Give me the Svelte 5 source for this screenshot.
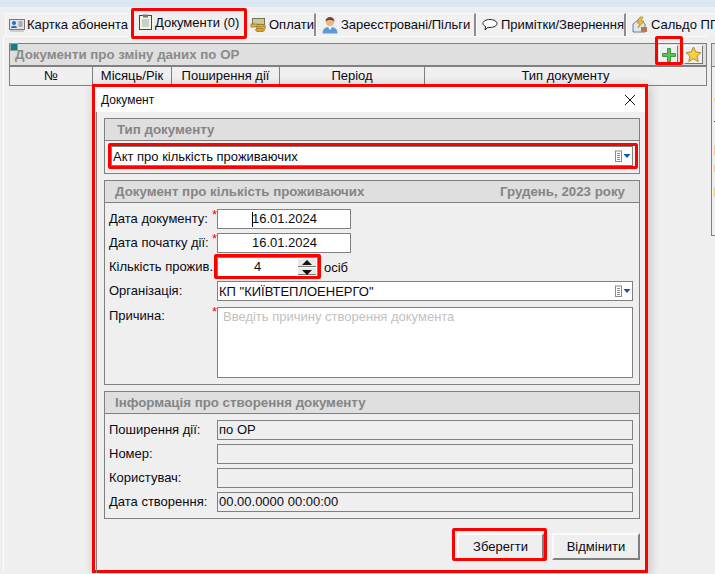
<script>
  const columns = ['№', 'Місяць/Рік', 'Поширення дії', 'Період', 'Тип документу'];
  const infoRows = [
    ['Поширення дії:', 'по ОР'],
    ['Номер:', ''],
    ['Користувач:', ''],
    ['Дата створення:', '00.00.0000 00:00:00']
  ];
</script>

{#snippet listIcon()}
  <svg class="listicon" width="17" height="12" viewBox="0 0 17 12" aria-hidden="true">
    <rect x="0.500" y="1" width="6" height="10.500" fill="#fff" stroke="#8a8a8a" />
    <path d="M2 3.500h3M2 5.500h3M2 7.500h3M2 9.500h3" stroke="#8a8a8a" fill="none" />
    <path d="M8.500 4h7l-3.500 4z" fill="#0f55b5" />
  </svg>
{/snippet}

<div class="page">
  <div class="band"></div>

  <nav class="tabs">
    <div class="tab">
      <svg width="16" height="14" viewBox="0 0 16 14" aria-hidden="true">
        <rect x="0.500" y="1.500" width="15" height="10" fill="#dfe3ea" stroke="#777" />
        <circle cx="5" cy="5" r="2" fill="#2f68b5" />
        <path d="M2 10c0-3 6-3 6 0z" fill="#2f68b5" />
        <path d="M9.500 4h4M9.500 6h4M9.500 8h4" stroke="#777" />
        <path d="M1 13h14" stroke="#aaa" />
      </svg>
      Картка абонента
    </div>
    <div class="tab active">
      <svg width="13" height="16" viewBox="0 0 13 16" aria-hidden="true">
        <rect x="0.500" y="1.500" width="12" height="14" fill="#f6f2e4" stroke="#6b3a20" />
        <rect x="4" y="0.500" width="5" height="3" fill="#777" />
        <path d="M3 6h7M3 8h7M3 10h7M3 12h7" stroke="#8fb7a8" />
      </svg>
      Документи (0)
    </div>
    <div class="tab">
      <svg width="17" height="15" viewBox="0 0 17 15" aria-hidden="true">
        <rect x="2.500" y="1.500" width="12" height="6" fill="#c9c9a6" stroke="#77754f" />
        <rect x="1" y="7" width="7" height="3" fill="#e0b040" stroke="#8f6a1a" stroke-width="0.700" />
        <ellipse cx="11" cy="9" rx="4.500" ry="1.800" fill="#e9b93f" stroke="#8f6a1a" stroke-width="0.700" />
        <ellipse cx="11" cy="11" rx="4.500" ry="1.800" fill="#e9b93f" stroke="#8f6a1a" stroke-width="0.700" />
        <ellipse cx="10" cy="13" rx="4.500" ry="1.800" fill="#d9a52f" stroke="#8f6a1a" stroke-width="0.700" />
      </svg>
      Оплати
    </div>
    <div class="tab">
      <svg width="16" height="18" viewBox="0 0 16 18" aria-hidden="true">
        <path d="M0.500 17.500c0-5 3-6.500 7.500-6.500s7.500 1.500 7.500 6.500z" fill="#5c9bd5" />
        <path d="M6 11l2 3 2-3z" fill="#fff" />
        <circle cx="8" cy="6" r="4.200" fill="#e8b58c" />
        <path d="M3.500 5.500c0-6 9-6 9 0-2.500-2-6.500-2-9 0z" fill="#6b4a2f" />
      </svg>
      Зареєстровані/Пільги
    </div>
    <div class="tab">
      <svg width="16" height="14" viewBox="0 0 16 14" aria-hidden="true">
        <path d="M8 1.500c4 0 7 1.700 7 4s-3 4-7 4c-.7 0-1.300 0-2-.2L3 12l.7-3.500C2 7.800 1 6.700 1 5.500c0-2.300 3-4 7-4z" fill="#fff" stroke="#222" />
      </svg>
      Примітки/Звернення
    </div>
    <div class="tab">
      <svg width="16" height="17" viewBox="0 0 16 17" aria-hidden="true">
        <path d="M1 16V8l6-5 6 5v8z" fill="#dfe6ef" stroke="#6f7d90" />
        <path d="M8 1l-3 6h3l-2 5 6-7H9l2-4z" fill="#f2c230" stroke="#a87a10" stroke-width="0.600" />
        <rect x="9" y="11" width="6" height="5" fill="#b9793f" />
      </svg>
      Сальдо ПП
    </div>
  </nav>

  <main class="content">
    <div class="marker"></div>
    <header class="panelhead">
      <span>Документи про зміну даних по ОР</span>
      <div class="tools">
        <button class="tool" aria-label="Додати">
          <svg width="14" height="14" viewBox="0 0 14 14" aria-hidden="true">
            <path d="M5.500 0.500h3v5h5v3h-5v5h-3v-5h-5v-3h5z" fill="#5cbf58" stroke="#3c9a42" />
          </svg>
        </button>
        <button class="tool" aria-label="Обране">
          <svg width="17" height="17" viewBox="0 0 17 17" aria-hidden="true">
            <path d="M8.500 1l2.300 5 5.200.6-3.900 3.500 1.100 5.400-4.700-2.700-4.700 2.700 1.100-5.400L1 6.600 6.200 6z" fill="#f7cf45" stroke="#b08a2a" />
          </svg>
        </button>
      </div>
    </header>
    <div class="thead">
      {#each columns as c}
        <div class="th">{c}</div>
      {/each}
    </div>
  </main>

  <aside class="sidepanel">
    <div class="sidehead"></div>
    <i class="dot d1"></i><i class="dot d2"></i><i class="dot d3"></i><i class="dot d4"></i><i class="dot d5"></i>
  </aside>

  <section class="modal">
    <div class="titlebar">
      <span>Документ</span>
      <svg width="12" height="12" viewBox="0 0 12 12" aria-hidden="true">
        <path d="M1 1l10 10M11 1L1 11" stroke="#111" stroke-width="1" fill="none" />
      </svg>
    </div>
    <div class="mbody">
      <fieldset class="group first">
        <div class="ghead"><span class="gtitle indent">Тип документу</span></div>
        <div class="selectwrap">
          <div class="box select">
            <span>Акт про кількість проживаючих</span>
            {@render listIcon()}
          </div>
        </div>
      </fieldset>

      <fieldset class="group second">
        <div class="ghead">
          <span class="gtitle">Документ про кількість проживаючих</span>
          <span class="gtitle">Грудень, 2023 року</span>
        </div>
        <div class="rows">
          <div class="row">
            <label>Дата документу:<b>*</b></label>
            <div class="box date first-date"><span class="caret"></span>16.01.2024</div>
          </div>
          <div class="row">
            <label>Дата початку дії:<b>*</b></label>
            <div class="box date">16.01.2024</div>
          </div>
          <div class="row">
            <label>Кількість прожив.</label>
            <div class="spinrow">
              <div class="box spin">
                <span class="spinval">4</span>
                <div class="arrows">
                  <i class="up"></i>
                  <i class="down"></i>
                </div>
              </div>
              <span>осіб</span>
            </div>
          </div>
          <div class="row">
            <label>Організація:</label>
            <div class="box select">
              <span>КП "КИЇВТЕПЛОЕНЕРГО"</span>
              {@render listIcon()}
            </div>
          </div>
          <div class="row reason">
            <label>Причина:<b>*</b></label>
            <div class="box area">Введіть причину створення документа</div>
          </div>
        </div>
      </fieldset>

      <fieldset class="group third">
        <div class="ghead"><span class="gtitle">Інформація про створення документу</span></div>
        <div class="rows">
          {#each infoRows as [label, value]}
            <div class="row">
              <label>{label}</label>
              <div class="box readonly">{value}</div>
            </div>
          {/each}
        </div>
      </fieldset>

      <div class="actions">
        <button class="btn save">Зберегти</button>
        <button class="btn cancel">Відмінити</button>
      </div>
    </div>
  </section>

  <div class="mark m-tab"></div>
  <div class="mark m-plus"></div>
  <div class="mark m-select"></div>
  <div class="mark m-spin"></div>
  <div class="mark m-save"></div>
</div>

<style>
  :global(body) {
    margin: 0;
    background: #efefef;
  }
  .page {
    position: relative;
    width: 715px;
    height: 574px;
    overflow: hidden;
    background: #efefef;
    font: 13px "Liberation Sans", Arial, sans-serif;
    color: #0a0a14;
  }
  .band {
    height: 7px;
    background: #dae6f2;
  }
  .tabs {
    display: grid;
    grid-template-columns: 126px 115px 70px 160px 150px 1fr;
    padding-left: 5px;
    margin-top: 6px;
    height: 23px;
    width: 720px;
  }
  .tab {
    display: flex;
    align-items: center;
    gap: 3px;
    padding: 0 0 1px 5px;
    background: #f1f1f1;
    border-top: 1px solid #fbfbfb;
    border-left: 1px solid #fbfbfb;
    border-right: 2px solid #8c8c8c;
    white-space: nowrap;
    box-sizing: border-box;
  }
  .tab:first-child {
    border-right: 0;
    padding-left: 3px;
    gap: 2px;
  }
  .tab:nth-child(3) {
    padding-left: 3px;
    gap: 2px;
  }
  .tab.active {
    margin-top: -2px;
    padding-left: 8px;
    border: 0;
    background: #efefef;
    position: relative;
    bottom: 1px;
  }
  .content {
    position: relative;
    margin: 0 0 0 3px;
    padding: 6px 0 0 5px;
    width: 698px;
    border-top: 1px solid #fafafa;
    border-left: 1px solid #fafafa;
    height: 530px;
  }
  .marker {
    position: absolute;
    left: 6px;
    top: 6px;
    width: 6px;
    height: 6px;
    background: #0d8080;
    border: 1px solid #9a9a9a;
    z-index: 1;
  }
  .panelhead {
    display: flex;
    justify-content: space-between;
    align-items: center;
    box-sizing: border-box;
    height: 23px;
    padding: 0 3px 0 5px;
    background: #dfdfdf;
    border: 1px solid #808080;
    font-weight: bold;
    font-size: 13.300px;
    color: #8a8a8a;
  }
  .tools {
    display: flex;
    gap: 6px;
  }
  .tool {
    box-sizing: border-box;
    display: flex;
    align-items: center;
    justify-content: center;
    width: 19px;
    height: 19px;
    padding: 0;
    background: #efefef;
    border: 1px solid;
    border-color: #fff #777 #777 #fff;
  }
  .thead {
    display: grid;
    grid-template-columns: 83px 79px 108px 145px 1fr;
    box-sizing: border-box;
    height: 20px;
    border: 1px solid #808080;
    background: #f0f0f0;
  }
  .th {
    text-align: center;
    line-height: 18px;
    border-right: 1px solid #808080;
  }
  .th:last-child {
    border-right: 0;
  }
  .sidepanel {
    position: absolute;
    left: 711px;
    top: 43px;
    width: 20px;
    height: 193px;
    box-sizing: border-box;
    border: 1px solid #808080;
    background: #efefef;
  }
  .sidehead {
    height: 22px;
    background: #dfdfdf;
    border-bottom: 1px solid #808080;
  }
  .dot {
    position: absolute;
    left: 2px;
    width: 2px;
    background: #f6cf72;
  }
  .d1 { top: 54px; height: 3px; background: #f3dc6b; }
  .d2 { top: 77px; height: 1px; background: #7a2a10; }
  .d3 { top: 101px; height: 10px; }
  .d4 { top: 121px; height: 7px; }
  .d5 { top: 143px; height: 10px; }

  .modal {
    position: absolute;
    left: 92px;
    top: 84px;
    width: 556px;
    height: 489px;
    box-sizing: border-box;
    border: 3px solid #f00;
    background: #efefef;
    box-shadow: 2px 2px 10px rgba(0, 0, 0, 0.2);
    z-index: 2;
  }
  .titlebar {
    display: flex;
    justify-content: space-between;
    align-items: center;
    height: 25px;
    padding: 0 9px 0 6px;
    background: #fff;
    font-size: 12px;
  }
  .mbody {
    margin-left: 1px;
    height: 461px;
    box-sizing: border-box;
    padding: 6px 5px 0 7px;
    border-left: 1px solid #808080;
  }
  .group {
    margin: 0;
    padding: 0;
    min-width: 0;
    border: 1px solid #808080;
  }
  .group.first {
    height: 56px;
    box-sizing: border-box;
  }
  .group.second {
    margin-top: 6px;
    height: 205px;
    box-sizing: border-box;
  }
  .group.third {
    margin-top: 6px;
    height: 128px;
    box-sizing: border-box;
  }
  .ghead {
    display: flex;
    justify-content: space-between;
    align-items: center;
    box-sizing: border-box;
    height: 22px;
    padding: 0 14px 0 10px;
    background: #dfdfdf;
    border-bottom: 1px solid #808080;
  }
  .gtitle {
    font-weight: bold;
    font-size: 13.300px;
    color: #858585;
  }
  .gtitle.indent {
    padding-left: 2px;
  }
  .selectwrap {
    padding: 5px 6px 0 6px;
  }
  .selectwrap .select {
    height: 20px;
  }
  .rows {
    display: flex;
    flex-direction: column;
    gap: 4px;
    padding: 6px 6px 0 4px;
  }
  .row {
    display: grid;
    grid-template-columns: 108px 1fr;
    height: 20px;
    align-items: center;
  }
  .row.reason {
    height: 71px;
    margin-top: 2px;
    align-items: start;
  }
  .row label {
    position: relative;
    top: -1px;
    white-space: nowrap;
  }
  .row.reason label {
    top: 1px;
  }
  .row label b {
    position: absolute;
    left: 103px;
    top: -4px;
    color: #f00;
    font-weight: normal;
    font-size: 13px;
  }
  .box {
    box-sizing: border-box;
    height: 20px;
    padding: 0 0 0 1px;
    background: #fff;
    border: 1px solid #808080;
    line-height: 17px;
    white-space: nowrap;
  }
  .select {
    display: flex;
    justify-content: space-between;
    align-items: center;
    padding-right: 0;
  }
  .listicon {
    flex: none;
  }
  .date {
    position: relative;
    width: 134px;
    text-align: center;
  }
  .caret {
    position: absolute;
    left: 34px;
    top: 2px;
    width: 1px;
    height: 15px;
    background: #000;
  }
  .spinrow {
    display: flex;
    align-items: center;
    gap: 6px;
  }
  .spin {
    display: flex;
    width: 101px;
    background: #fff;
  }
  .spinval {
    flex: 1;
    text-align: center;
    padding-right: 2px;
  }
  .arrows {
    display: flex;
    flex-direction: column;
    width: 18px;
    margin-right: 1px;
    padding: 1px 0;
    gap: 1px;
    box-sizing: border-box;
  }
  .arrows i {
    position: relative;
    display: block;
    flex: 1;
    background: #e9e9e9;
    border-bottom: 1px solid #777;
  }
  .arrows i::after {
    content: "";
    position: absolute;
    left: 4px;
    border-left: 5px solid transparent;
    border-right: 5px solid transparent;
  }
  .arrows .up::after {
    top: 1px;
    border-bottom: 5px solid #111;
  }
  .arrows .down::after {
    top: 2px;
    border-top: 5px solid #111;
  }
  .area {
    height: 71px;
    padding: 0 5px;
    color: #c4c0c0;
  }
  .readonly {
    background: #efefef;
  }
  .actions {
    display: flex;
    justify-content: flex-end;
    gap: 8px;
    margin-top: 14px;
  }
  .btn {
    box-sizing: border-box;
    height: 27px;
    padding: 0;
    font: 13px "Liberation Sans", Arial, sans-serif;
    color: #0a0a14;
    background: #efefef;
    border: 2px solid;
    border-color: #fbfbfb #808080 #808080 #fbfbfb;
  }
  .save { width: 87px; }
  .cancel { width: 88px; }

  .mark {
    position: absolute;
    box-sizing: border-box;
    border: 3px solid #f00;
    border-radius: 2px;
    z-index: 3;
  }
  .m-tab { left: 131px; top: 8px; width: 116px; height: 31px; }
  .m-plus { left: 655px; top: 36px; width: 28px; height: 29px; }
  .m-select { left: 108px; top: 143px; width: 530px; height: 26px; }
  .m-spin { left: 214px; top: 254px; width: 107px; height: 25px; }
  .m-save { left: 452px; top: 528px; width: 95px; height: 33px; }
</style>
